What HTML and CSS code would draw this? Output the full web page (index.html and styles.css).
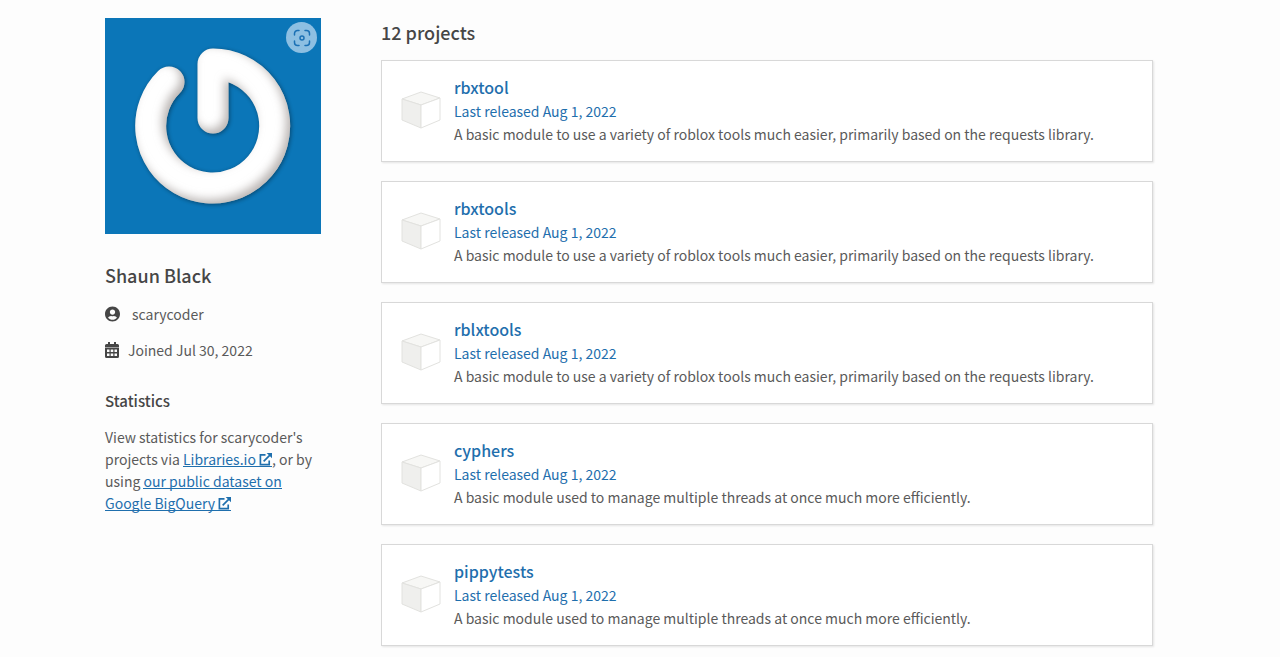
FILE: index.html
```
<!DOCTYPE html>
<html lang="en">
<head>
    <meta charset="UTF-8">
    <meta name="viewport" content="width=device-width, initial-scale=1.0">
    <title>Profile of scarycoder</title>
    <link rel="stylesheet" href="styles.css">
</head>
<body>

    <!-- shared icons -->
    <svg class="sprite" aria-hidden="true">
        <symbol id="icon-cube" viewBox="0 0 40 38">
            <g stroke="#e2e2df" stroke-linejoin="round">
                <path fill="#f7f7f5" d="M1 8 20 1 39 7 20 14z"/>
                <path fill="#efefed" d="M1 8 20 14V37L1 29z"/>
                <path fill="#fff" d="M20 14 39 7V29L20 37z"/>
            </g>
        </symbol>
        <symbol id="icon-external" viewBox="0 0 14 14">
            <g fill="none" stroke="currentColor" stroke-width="1.8">
                <path d="M7 2H1.500v10.500H11V8"/>
                <path d="M5 9 12 2"/>
            </g>
            <path fill="currentColor" d="M8.300 0H14v5.700z"/>
        </symbol>
    </svg>

    <div class="page">
        <aside class="sidebar">
            <div class="avatar">
                <svg viewBox="0 0 216 216" role="img" aria-label="Avatar for Shaun Black">
                    <filter id="bevel" filterUnits="userSpaceOnUse" x="0" y="0" width="216" height="216" color-interpolation-filters="sRGB">
                        <feGaussianBlur in="SourceAlpha" stdDeviation="5" result="soft"/>
                        <feOffset in="soft" dx="-4" dy="-4" result="moved"/>
                        <feFlood flood-color="#8c8480" flood-opacity="0.6"/>
                        <feComposite in2="SourceAlpha" operator="in"/>
                        <feComposite in2="moved" operator="out" result="shade"/>
                        <feGaussianBlur in="SourceAlpha" stdDeviation="2"/>
                        <feOffset dx="1" dy="1" result="drop"/>
                        <feComponentTransfer in="drop" result="shadow">
                            <feFuncA type="linear" slope="0.4"/>
                        </feComponentTransfer>
                        <feMerge>
                            <feMergeNode in="shadow"/>
                            <feMergeNode in="SourceGraphic"/>
                            <feMergeNode in="shade"/>
                        </feMerge>
                    </filter>
                    <rect width="216" height="216" fill="#0b76b8"/>
                    <path d="M64 64A62 62 0 1 0 108 46V100" fill="none" stroke="#fff" stroke-width="31" stroke-linecap="round" stroke-linejoin="round" filter="url(#bevel)"/>
                </svg>
                <button class="lens" type="button" aria-label="Visual search">
                    <svg viewBox="0 0 18 18" width="18" height="18" fill="none" stroke="#1b70b4" stroke-width="1.5" stroke-linecap="round">
                        <path d="M1.500 6V4.500a3 3 0 0 1 3-3H6M12 1.500h1.500a3 3 0 0 1 3 3V6M16.500 12v1.500a3 3 0 0 1-3 3H12M6 16.500H4.500a3 3 0 0 1-3-3V12"/>
                        <circle cx="9" cy="9" r="2"/>
                    </svg>
                </button>
            </div>

            <h1>Shaun Black</h1>
            <p class="meta username">
                <svg viewBox="0 0 496 512" width="15" height="16" fill="currentColor" aria-hidden="true"><path d="M248 8C111 8 0 119 0 256s111 248 248 248 248-111 248-248S385 8 248 8zm0 96c48.600 0 88 39.400 88 88s-39.400 88-88 88-88-39.400-88-88 39.400-88 88-88zm0 344c-58.700 0-111.300-26.600-146.500-68.200 18.800-35.400 55.600-59.800 98.500-59.800 2.400 0 4.800.4 7.100 1.100 13 4.200 26.600 6.900 40.900 6.900 14.300 0 28-2.700 40.900-6.900 2.300-.7 4.700-1.100 7.100-1.100 42.900 0 79.700 24.400 98.500 59.800C359.300 421.400 306.700 448 248 448z"/></svg>
                scarycoder
            </p>
            <p class="meta">
                <svg viewBox="0 0 14 16" width="14" height="16" fill="currentColor" aria-hidden="true">
                    <path fill-rule="evenodd" d="M3 0h2v2h4V0h2v2h1.500Q14 2 14 3.500V14.500Q14 16 12.500 16h-11Q0 16 0 14.500V3.500Q0 2 1.500 2H3zM0 5V5.600H14V5zM2 7.500V10h2.500V7.500zM5.700 7.500V10h2.600V7.500zM9.500 7.500V10H12V7.500zM2 11.500V14h2.500v-2.500zM5.700 11.500V14h2.600v-2.500zM9.500 11.500V14H12v-2.500z"/>
                </svg>
                Joined Jul 30, 2022
            </p>

            <h2>Statistics</h2>
            <p class="stats">
                View statistics for scarycoder's projects via <a href="#">Libraries.io <svg width="13" height="13" aria-hidden="true"><use href="#icon-external"/></svg></a>, or by using <a href="#">our public dataset on Google BigQuery <svg width="13" height="13" aria-hidden="true"><use href="#icon-external"/></svg></a>
            </p>
        </aside>

        <main class="projects">
            <h2>12 projects</h2>
            <a class="card" href="#">
                <svg class="cube" aria-hidden="true"><use href="#icon-cube"/></svg>
                <div>
                    <h3>rbxtool</h3>
                    <p class="released">Last released <time datetime="2022-08-01">Aug 1, 2022</time></p>
                    <p class="description">A basic module to use a variety of roblox tools much easier, primarily based on the requests library.</p>
                </div>
            </a>
            <a class="card" href="#">
                <svg class="cube" aria-hidden="true"><use href="#icon-cube"/></svg>
                <div>
                    <h3>rbxtools</h3>
                    <p class="released">Last released <time datetime="2022-08-01">Aug 1, 2022</time></p>
                    <p class="description">A basic module to use a variety of roblox tools much easier, primarily based on the requests library.</p>
                </div>
            </a>
            <a class="card" href="#">
                <svg class="cube" aria-hidden="true"><use href="#icon-cube"/></svg>
                <div>
                    <h3>rblxtools</h3>
                    <p class="released">Last released <time datetime="2022-08-01">Aug 1, 2022</time></p>
                    <p class="description">A basic module to use a variety of roblox tools much easier, primarily based on the requests library.</p>
                </div>
            </a>
            <a class="card" href="#">
                <svg class="cube" aria-hidden="true"><use href="#icon-cube"/></svg>
                <div>
                    <h3>cyphers</h3>
                    <p class="released">Last released <time datetime="2022-08-01">Aug 1, 2022</time></p>
                    <p class="description">A basic module used to manage multiple threads at once much more efficiently.</p>
                </div>
            </a>
            <a class="card" href="#">
                <svg class="cube" aria-hidden="true"><use href="#icon-cube"/></svg>
                <div>
                    <h3>pippytests</h3>
                    <p class="released">Last released <time datetime="2022-08-01">Aug 1, 2022</time></p>
                    <p class="description">A basic module used to manage multiple threads at once much more efficiently.</p>
                </div>
            </a>
        </main>
    </div>

</body>
</html>
```
FILE: styles.css
```
* { box-sizing: border-box; }
body {
    margin: 0;
    padding: 18px 22px 12px 0;
    background: #fdfdfd;
    color: #5a5a5a;
    font-family: "Noto Sans CJK SC", "Open Sans", sans-serif;
    font-size: 14px;
    line-height: 22px;
}
h1, h2, h3, p { margin: 0; }
h1, h2, h3 {
    color: #464646;
    font-weight: 500;
}
a { color: #1f6fad; }
.sprite {
    position: absolute;
    width: 0;
    height: 0;
}
.page {
    display: grid;
    grid-template-columns: 216px 1fr;
    gap: 60px;
    max-width: 1048px;
    margin: 0 auto;
}

/* sidebar */
.avatar {
    position: relative;
    margin-bottom: 27px;
}
.avatar > svg {
    display: block;
    width: 100%;
}
.lens {
    position: absolute;
    top: 4px;
    right: 4px;
    display: flex;
    align-items: center;
    justify-content: center;
    width: 31px;
    height: 31px;
    padding: 0;
    border: none;
    border-radius: 50%;
    background: #8dbfe2;
    cursor: pointer;
}
h1 {
    margin-bottom: 14px;
    font-size: 18px;
    line-height: 28px;
}
.meta {
    display: flex;
    align-items: center;
    gap: 9px;
    margin-bottom: 14px;
}
.meta svg { color: #464646; }
.username { gap: 12px; }
.sidebar h2 {
    margin: 29px 0 14px;
    font-size: 15px;
    line-height: 22px;
}
/* the underline runs below the icon too */
.stats a {
    background: linear-gradient(#1f6fad, #1f6fad) 0 calc(100% - 2px) / 100% 1px no-repeat;
    text-decoration: none;
}
.stats svg { vertical-align: -1px; }

/* project list */
.projects h2 {
    margin-bottom: 14px;
    font-size: 18px;
    line-height: 28px;
}
.card {
    display: flex;
    align-items: center;
    gap: 13px;
    margin-bottom: 19px;
    padding: 14px 19px 16px;
    border: 1px solid #d8d8d8;
    background: #fff;
    box-shadow: 1px 1px 2px rgba(0, 0, 0, 0.1);
    text-decoration: none;
}
.card:last-child { margin-bottom: 0; }
.card:hover { border-color: #1f6fad; }
.cube {
    width: 40px;
    height: 38px;
}
.card h3 {
    color: #1f6fad;
    font-size: 16px;
    line-height: 24px;
}
.released { line-height: 24px; }
.description {
    color: #5a5a5a;
    line-height: 22px;
}
```
